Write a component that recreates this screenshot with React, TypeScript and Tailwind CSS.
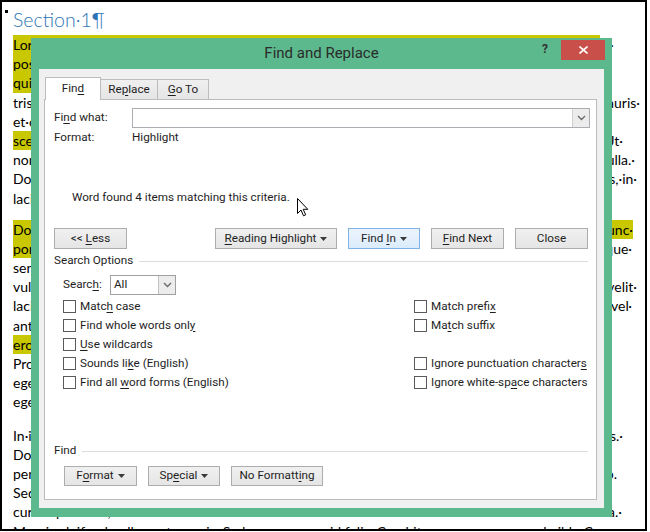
import type { ReactNode } from 'react'

// Word document page with the Find and Replace dialog (Win8 chrome) floating over it.

type Line = {
  l: string
  r?: string
  hl?: boolean
  rhl?: boolean
  lw?: string
  pr?: string
}

const paragraphs: { gap: string; lines: Line[] }[] = [
  {
    gap: 'mt-0',
    lines: [
      { l: 'Lorem·ipsum·dolor·sit·amet,·consectetuer·adipiscing·elit.·Maecenas·porttitor·congue·massa.·Fusce·', hl: true, lw: 'w-[587px]' },
      { l: 'posuere,·magna·', hl: true },
      { l: 'quis·urna.·Nunc·', hl: true },
      { l: 'tristique·senectus·', r: 'Mauris·', pr: 'pr-[5px]' },
      { l: 'et·orci.·Aenean·' },
      { l: 'sce', hl: true, r: 'eleifend.·Ut·', pr: 'pr-[22px]' },
      { l: 'nonummy.·Fusce·', r: 'Integer·nulla.·', pr: 'pr-[10px]' },
      { l: 'Donec·blandit·', r: 'pretium·metus,·in·', pr: 'pr-[8px]' },
      { l: 'lacinia·nulla·nisl·' },
    ],
  },
  {
    gap: 'mt-[12px]',
    lines: [
      { l: 'Donec·ut·est·', hl: true, r: 'in·nunc·', rhl: true, pr: 'pr-[12px]' },
      { l: 'porta·tristique.·', hl: true, r: 'morbi·tristique·', pr: 'pr-[13px]' },
      { l: 'senectus·et·netus·' },
      { l: 'vulputate·vel,·', r: 'porttitor,·velit·', pr: 'pr-[8px]' },
      { l: 'lacinia·egestas·', r: 'magna·vel·', pr: 'pr-[13px]' },
      { l: 'ante·adipiscing·' },
      { l: 'ero', hl: true },
      { l: 'Proin·semper,·' },
      { l: 'eget·pede.·Sed·' },
      { l: 'eget,·consequat·' },
    ],
  },
  {
    gap: 'mt-[14px]',
    lines: [
      { l: 'In·in·nunc.·', r: 'hymenaeos.·', pr: 'pr-[22px]' },
      { l: 'Donec·ullamcorper·' },
      { l: 'penatibus·et·', r: 'odio.', pr: 'pr-[28px]' },
      { l: 'Sed·ac·ligula.·' },
      { l: 'cursus·porttitor,·', r: 'urna.·', pr: 'pr-[23px]' },
      { l: 'Mauris·eleifend·nulla·eget·mauris.·Sed·cursus·quam·id·felis.·Curabitur·posuere·quam·vel·nibh.·Cras·' },
    ],
  },
]

function U({ children }: { children: ReactNode }) {
  return <span className="underline decoration-1 underline-offset-[2px]">{children}</span>
}

function Caret() {
  return (
    <svg width="7" height="4" viewBox="0 0 7 4" className="ml-[4px] inline-block align-middle">
      <path d="M0 0h7L3.5 4z" fill="#3a3a3a" />
    </svg>
  )
}

function Chevron() {
  return (
    <svg width="9" height="6" viewBox="0 0 9 6">
      <path d="M1 1l3.5 3.5L8 1" fill="none" stroke="#6a6a6a" strokeWidth="1.4" />
    </svg>
  )
}

function Btn({ w, children, active }: { w: string; children: ReactNode; active?: boolean }) {
  return (
    <div
      className={
        active
          ? `${w} flex h-full items-center justify-center border border-[#7eb4ea] bg-gradient-to-b from-[#ecf4fc] to-[#dcecfc]`
          : `${w} flex h-full items-center justify-center border border-[#adadad] bg-gradient-to-b from-[#f0f0f0] to-[#e5e5e5]`
      }
    >
      <span className="whitespace-pre">{children}</span>
    </div>
  )
}

function Check({ children }: { children?: ReactNode }) {
  if (!children) return <div className="h-[19px]" />
  return (
    <div className="flex h-[19px] items-center gap-[4px] whitespace-nowrap">
      <span className="h-[13px] w-[13px] shrink-0 border border-[#5a5a5a] bg-white" />
      <span>{children}</span>
    </div>
  )
}

function Document() {
  return (
    <div className="h-[531px] w-[647px] overflow-hidden border-2 border-black pl-[11px] font-['Lato',sans-serif] text-[14px] text-black">
      <div className="mt-[3px] font-light text-[19.5px] leading-[30px] text-[#2e74b5]">Section·1¶</div>
      {paragraphs.map((p, i) => (
        <div key={i} className={p.gap}>
          {p.lines.map((ln, j) => (
            <div key={j} className={`flex h-[19.2px] justify-between whitespace-nowrap leading-[19.2px] ${ln.pr ?? ''}`}>
              <span className={ln.hl ? `inline-block bg-[#c9c800] ${ln.lw ?? ''}` : 'inline-block'}>{ln.l}</span>
              {ln.r && <span className={ln.rhl ? 'inline-block bg-[#c9c800]' : 'inline-block'}>{ln.r}</span>}
            </div>
          ))}
        </div>
      ))}
    </div>
  )
}

function Dialog() {
  return (
    <div className="absolute left-[31px] top-[38px] flex h-[479px] w-[581px] flex-col bg-[#5cb98d] font-['Roboto',sans-serif] text-[11.7px] text-[#1e1e1e]">
      <div className="grid h-[31px] shrink-0 grid-cols-[1fr_auto_1fr]">
        <div />
        <div className="flex items-center text-[15px] text-[#2b2b2b]">Find and Replace</div>
        <div className="flex items-start justify-end pr-[7px]">
          <span className="mt-[2px] mr-[13px] text-[12px] font-bold text-[#333]">?</span>
          <div className="mt-[2px] flex h-[20px] w-[44px] items-center justify-center bg-[#c9504a]">
            <svg width="9" height="8" viewBox="0 0 9 8">
              <path d="M0.5 0.5l8 7M8.5 0.5l-8 7" stroke="#fff" strokeWidth="1.6" />
            </svg>
          </div>
        </div>
      </div>

      <div className="mx-[8px] mb-[9px] flex flex-1 flex-col bg-[#f0f0f0] pb-[8px] pl-[5px] pr-[7px] pt-[8px]">
        <div className="flex h-[22px] items-end pl-[1px]">
          <div className="relative z-10 -mb-px flex h-[23px] w-[56px] items-center justify-center border border-b-0 border-[#bcbcbc] bg-white">
            <span>
              Fin<U>d</U>
            </span>
          </div>
          <div className="flex h-[20px] w-[57px] items-center justify-center border border-l-0 border-b-0 border-[#bcbcbc] bg-gradient-to-b from-[#f0f0f0] to-[#e5e5e5]">
            <span>
              Re<U>p</U>lace
            </span>
          </div>
          <div className="flex h-[20px] w-[51px] items-center justify-center border border-l-0 border-b-0 border-[#bcbcbc] bg-gradient-to-b from-[#f0f0f0] to-[#e5e5e5]">
            <span>
              <U>G</U>o To
            </span>
          </div>
        </div>

        <div className="flex flex-1 flex-col border border-[#bcbcbc] bg-white pl-[9px] pr-[6px]">
          <div className="mt-[8px] flex h-[20px] items-center">
            <span className="w-[78px]">
              Fi<U>n</U>d what:
            </span>
            <div className="flex h-full flex-1 justify-end border border-[#abadb3] bg-white">
              <div className="flex h-full w-[17px] items-center justify-center border-l border-[#d0d0d0] bg-[#ececec]">
                <Chevron />
              </div>
            </div>
          </div>
          <div className="mt-[2px] flex h-[16px] items-center">
            <span className="w-[78px]">Format:</span>
            <span>Highlight</span>
          </div>
          <div className="mt-[44px] flex h-[16px] items-center pl-[18px]">Word found 4 items matching this criteria.</div>

          <div className="mt-[22px] flex h-[21px]">
            <Btn w="w-[73px]">
              {'<< '}
              <U>L</U>ess
            </Btn>
            <div className="ml-auto mr-[2px] flex h-full gap-[11px]">
              <Btn w="w-[122px]">
                <U>R</U>eading Highlight
                <Caret />
              </Btn>
              <Btn w="w-[72px]" active>
                Find <U>I</U>n
                <Caret />
              </Btn>
              <Btn w="w-[73px]">
                <U>F</U>ind Next
              </Btn>
              <Btn w="w-[73px]">Close</Btn>
            </div>
          </div>

          <div className="mt-[4px] flex h-[16px] items-center gap-[6px]">
            <span>Search Options</span>
            <div className="mr-[2px] h-px flex-1 bg-[#dcdcdc]" />
          </div>

          <div className="mt-[6px] flex h-[20px] items-center pl-[9px]">
            <span className="w-[47px]">
              Searc<U>h</U>:
            </span>
            <div className="flex h-full w-[66px] items-center border border-[#a0a0a0] bg-white pl-[3px]">
              <span className="flex-1">All</span>
              <div className="flex h-full w-[17px] items-center justify-center border-l border-[#c0c0c0] bg-[#ececec]">
                <Chevron />
              </div>
            </div>
          </div>

          <div className="mt-[2px] grid grid-cols-[351px_1fr] pl-[9px]">
            <Check>
              Matc<U>h</U> case
            </Check>
            <Check>
              Match prefi<U>x</U>
            </Check>
            <Check>
              Find whole words onl<U>y</U>
            </Check>
            <Check>
              Ma<U>t</U>ch suffix
            </Check>
            <Check>
              <U>U</U>se wildcards
            </Check>
            <Check />
            <Check>
              Sounds li<U>k</U>e (English)
            </Check>
            <Check>
              Ignore punctuation character<U>s</U>
            </Check>
            <Check>
              Find all <U>w</U>ord forms (English)
            </Check>
            <Check>
              Ignore white-sp<U>a</U>ce characters
            </Check>
          </div>

          <div className="mt-[51px] flex h-[16px] items-center gap-[6px]">
            <span>Find</span>
            <div className="mr-[2px] h-px flex-1 bg-[#dcdcdc]" />
          </div>

          <div className="mt-[7px] flex h-[20px] gap-[11px] pl-[10px]">
            <Btn w="w-[73px]">
              F<U>o</U>rmat
              <Caret />
            </Btn>
            <Btn w="w-[72px]">
              Sp<U>e</U>cial
              <Caret />
            </Btn>
            <Btn w="w-[92px]">
              No Formatt<U>i</U>ng
            </Btn>
          </div>
        </div>
      </div>
    </div>
  )
}

export default function App() {
  return (
    <div className="relative h-[532px] w-[650px] overflow-hidden bg-white">
      <Document />
      <span className="absolute left-[5px] top-[10px] h-[3px] w-[3px] bg-black" />
      <Dialog />
      <svg className="absolute left-[297px] top-[198px]" width="12" height="19" viewBox="0 0 12 19">
        <path d="M0.5 0.5V15.5L4 12L6.5 17.8L8.7 16.8L6.2 11.3H10.8Z" fill="#fff" stroke="#000" strokeWidth="1" />
      </svg>
    </div>
  )
}
